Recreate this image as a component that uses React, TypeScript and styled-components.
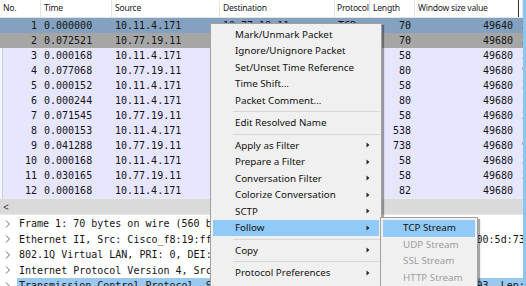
import React from "react";
import styled, { createGlobalStyle } from "styled-components";

const GlobalStyle = createGlobalStyle`
  html, body {
    margin: 0;
    padding: 0;
    background: #ffffff;
    overflow: hidden;
  }
`;

const MONO = `"DejaVu Sans Mono", "Liberation Mono", monospace`;
const UI = `"Noto Sans", "Open Sans", sans-serif`;

const COLUMNS = "41px 71px 108px 115px 35px 45px 104px 1fr";

interface IPacket {
  no: number;
  time: string;
  source: string;
  destination: string;
  protocol: string;
  length: number;
  window: number;
  info: string;
}

const packets: IPacket[] = [
  { no: 1, time: "0.000000", source: "10.11.4.171", destination: "10.77.19.11", protocol: "TCP", length: 70, window: 49640, info: "3389 → 51683" },
  { no: 2, time: "0.072521", source: "10.77.19.11", destination: "10.11.4.171", protocol: "TCP", length: 70, window: 49680, info: "2..." },
  { no: 3, time: "0.000168", source: "10.11.4.171", destination: "10.77.19.11", protocol: "TCP", length: 58, window: 49680, info: "3389" },
  { no: 4, time: "0.077068", source: "10.77.19.11", destination: "10.11.4.171", protocol: "TCP", length: 80, window: 49680, info: "9..." },
  { no: 5, time: "0.000152", source: "10.11.4.171", destination: "10.77.19.11", protocol: "TCP", length: 58, window: 49680, info: "3389" },
  { no: 6, time: "0.000244", source: "10.11.4.171", destination: "10.77.19.11", protocol: "TCP", length: 80, window: 49680, info: "(..." },
  { no: 7, time: "0.071545", source: "10.77.19.11", destination: "10.11.4.171", protocol: "TCP", length: 58, window: 49680, info: "2..." },
  { no: 8, time: "0.000153", source: "10.11.4.171", destination: "10.77.19.11", protocol: "TCP", length: 538, window: 49680, info: "(..." },
  { no: 9, time: "0.041288", source: "10.77.19.11", destination: "10.11.4.171", protocol: "TCP", length: 738, window: 49680, info: "9..." },
  { no: 10, time: "0.000168", source: "10.11.4.171", destination: "10.77.19.11", protocol: "TCP", length: 58, window: 49680, info: "3389" },
  { no: 11, time: "0.030165", source: "10.77.19.11", destination: "10.11.4.171", protocol: "TCP", length: 58, window: 49680, info: "2..." },
  { no: 12, time: "0.000168", source: "10.11.4.171", destination: "10.77.19.11", protocol: "TCP", length: 82, window: 49680, info: "(..." },
];

const details = [
  "Frame 1: 70 bytes on wire (560 bits), 70 bytes captured (560 bits)",
  "Ethernet II, Src: Cisco_f8:19:ff (58:8d:09:f8:19:ff), Dst: Vmware_5d:73:c0 (00:5d:73:c0:00:00)",
  "802.1Q Virtual LAN, PRI: 0, DEI: 0, ID: 1193",
  "Internet Protocol Version 4, Src: 10.11.4.171, Dst: 10.77.19.11",
  "Transmission Control Protocol, Src Port: 443, Dst Port: 51683, Seq: 1, Ack: 93, Len: 0",
];

type MenuEntry = { label: string; arrow?: boolean; active?: boolean } | "sep";

const menuEntries: MenuEntry[] = [
  { label: "Mark/Unmark Packet" },
  { label: "Ignore/Unignore Packet" },
  { label: "Set/Unset Time Reference" },
  { label: "Time Shift..." },
  { label: "Packet Comment..." },
  "sep",
  { label: "Edit Resolved Name" },
  "sep",
  { label: "Apply as Filter", arrow: true },
  { label: "Prepare a Filter", arrow: true },
  { label: "Conversation Filter", arrow: true },
  { label: "Colorize Conversation", arrow: true },
  { label: "SCTP", arrow: true },
  { label: "Follow", arrow: true, active: true },
  "sep",
  { label: "Copy", arrow: true },
  "sep",
  { label: "Protocol Preferences", arrow: true },
  { label: "Decode As..." },
];

const followEntries = [
  { label: "TCP Stream", enabled: true },
  { label: "UDP Stream", enabled: false },
  { label: "SSL Stream", enabled: false },
  { label: "HTTP Stream", enabled: false },
];

const Chevron = () => (
  <ChevronBox>
    <svg width="6" height="8" viewBox="0 0 6 8">
      <path d="M1 0.5 L4.5 4 L1 7.5" fill="none" stroke="#6a6a6a" strokeWidth="1" />
    </svg>
  </ChevronBox>
);

const SubArrow = () => (
  <svg width="4" height="6" viewBox="0 0 4 6">
    <path d="M0.5 0.5 L3.5 3 L0.5 5.5 Z" fill="#2a2a2a" />
  </svg>
);

export default function App() {
  return (
    <>
      <GlobalStyle />
      <Window>
        <PacketList>
          <HeaderRow>
            <HeaderCell>No.</HeaderCell>
            <HeaderCell>Time</HeaderCell>
            <HeaderCell>Source</HeaderCell>
            <HeaderCell>Destination</HeaderCell>
            <HeaderCell>Protocol</HeaderCell>
            <HeaderCell>Length</HeaderCell>
            <HeaderCell>Window size value</HeaderCell>
            <HeaderCell>Info</HeaderCell>
          </HeaderRow>
          {packets.map((p) => (
            <PacketRow key={p.no} variant={p.no === 1 ? "selected" : p.no === 2 ? "hover" : "normal"}>
              <Cell align="right">{p.no}</Cell>
              <Cell>{p.time}</Cell>
              <Cell>{p.source}</Cell>
              <Cell>{p.destination}</Cell>
              <Cell>{p.protocol}</Cell>
              <Cell align="right">{p.length}</Cell>
              <Cell align="right">{p.window}</Cell>
              <Cell>{p.info}</Cell>
            </PacketRow>
          ))}
          <HScrollBar>
            <ScrollArrow>&lt;</ScrollArrow>
          </HScrollBar>
        </PacketList>
        <Splitter />
        <DetailPane>
          {details.map((d, i) => (
            <DetailRow key={i}>
              <Chevron />
              <DetailText selected={i === details.length - 1}>{d}</DetailText>
            </DetailRow>
          ))}
        </DetailPane>

        <ContextMenu>
          {menuEntries.map((e, i) =>
            e === "sep" ? (
              <Separator key={i} />
            ) : (
              <MenuItem key={i} active={!!e.active}>
                <span>{e.label}</span>
                {e.arrow && <SubArrow />}
              </MenuItem>
            )
          )}
        </ContextMenu>

        <SubMenu>
          {followEntries.map((e, i) => (
            <SubMenuItem key={i} active={i === 0} enabled={e.enabled}>
              {e.label}
            </SubMenuItem>
          ))}
        </SubMenu>
      </Window>
    </>
  );
}

const Window = styled.div`
  position: relative;
  width: 526px;
  height: 286px;
  overflow: hidden;
  background: #ffffff;
  display: flex;
  flex-direction: column;
  border-right: 3px solid #8ec5ee;
  box-sizing: border-box;
`;

const PacketList = styled.div`
  display: flex;
  flex-direction: column;
  background: #e7e6ff;
`;

const HeaderRow = styled.div`
  display: grid;
  grid-template-columns: ${COLUMNS};
  height: 18px;
  background: #ffffff;
  border-bottom: 1px solid #e3e3e3;
  box-sizing: border-box;
`;

const HeaderCell = styled.div`
  font-family: ${UI};
  font-size: 8.6px;
  letter-spacing: -0.25px;
  color: #1a1a1a;
  line-height: 17px;
  padding-left: 3px;
  border-right: 1px solid #e5e5e5;
  white-space: nowrap;
  overflow: hidden;
  &:nth-child(5) {
    padding-left: 2px;
  }
  &:nth-child(7) {
    border-right: 1px solid #333333;
  }
`;

const rowColors = {
  selected: "#84a2c0",
  hover: "#a6a6a6",
  normal: "#e7e6ff",
};

const PacketRow = styled.div<{ variant: "selected" | "hover" | "normal" }>`
  display: grid;
  grid-template-columns: ${COLUMNS};
  height: 15px;
  background: ${({ variant }) => rowColors[variant]};
  box-shadow: ${({ variant }) =>
    variant === "normal" ? "inset 2px 0 0 #f4f8fc, inset 3px 0 0 #c9cde0" : "none"};
  font-family: ${MONO};
  font-size: 10px;
  line-height: 15px;
  color: #141414;
`;

const Cell = styled.div<{ align?: "left" | "right" }>`
  text-align: ${({ align }) => align || "left"};
  padding: 0 4px 0 3px;
  white-space: nowrap;
  overflow: hidden;
  &:nth-child(7) {
    padding-right: 6px;
  }
`;

const HScrollBar = styled.div`
  height: 15px;
  background: #dadada;
  border-top: 1px solid #ececec;
  display: flex;
  align-items: center;
`;

const ScrollArrow = styled.span`
  font-family: ${UI};
  font-size: 10px;
  color: #333333;
  padding-left: 3px;
  line-height: 14px;
`;

const Splitter = styled.div`
  height: 3px;
  background: #f4f4f4;
  border-bottom: 1px solid #e6e6e6;
`;

const DetailPane = styled.div`
  display: flex;
  flex-direction: column;
  padding-top: 1px;
  background: #ffffff;
`;

const DetailRow = styled.div`
  display: flex;
  align-items: center;
  height: 15.5px;
  padding-left: 5px;
  gap: 6px;
`;

const ChevronBox = styled.span`
  flex-shrink: 0;
  display: flex;
  width: 6px;
  height: 8px;
`;

const DetailText = styled.div<{ selected: boolean }>`
  font-family: ${MONO};
  font-size: 10px;
  line-height: 15px;
  padding-left: 2px;
  color: #141414;
  white-space: nowrap;
  overflow: hidden;
  min-width: 0;
  background: ${({ selected }) => (selected ? "#99c9ef" : "transparent")};
  flex: 1;
`;

const ContextMenu = styled.div`
  position: absolute;
  left: 210px;
  top: 23px;
  width: 172px;
  padding: 2px 0;
  background: #f0f0f0;
  border: 1px solid #a0a0a0;
  box-shadow: 2px 2px 1px rgba(0, 0, 0, 0.35);
  box-sizing: border-box;
`;

const MenuItem = styled.div<{ active: boolean }>`
  display: flex;
  align-items: center;
  justify-content: space-between;
  height: 16.5px;
  margin: 0 2px;
  padding: 0 9px 0 22px;
  background: ${({ active }) => (active ? "#91c9f7" : "transparent")};
  font-family: ${UI};
  font-size: 9.8px;
  color: #111111;
  white-space: nowrap;
`;

const Separator = styled.div`
  height: 1px;
  margin: 2.5px 1px 2.5px 22px;
  background: #d7d7d7;
`;

const SubMenu = styled.div`
  position: absolute;
  left: 380px;
  top: 217px;
  width: 98px;
  padding: 2px 0;
  background: #f0f0f0;
  border: 1px solid #a0a0a0;
  box-shadow: 2px 2px 1px rgba(0, 0, 0, 0.35);
  box-sizing: border-box;
`;

const SubMenuItem = styled.div<{ active: boolean; enabled: boolean }>`
  height: 16.5px;
  line-height: 16.5px;
  margin: 0 2px;
  padding-left: 20px;
  background: ${({ active }) => (active ? "#91c9f7" : "transparent")};
  font-family: ${UI};
  font-size: 9.8px;
  color: ${({ enabled }) => (enabled ? "#111111" : "#9d9d9d")};
  white-space: nowrap;
`;
